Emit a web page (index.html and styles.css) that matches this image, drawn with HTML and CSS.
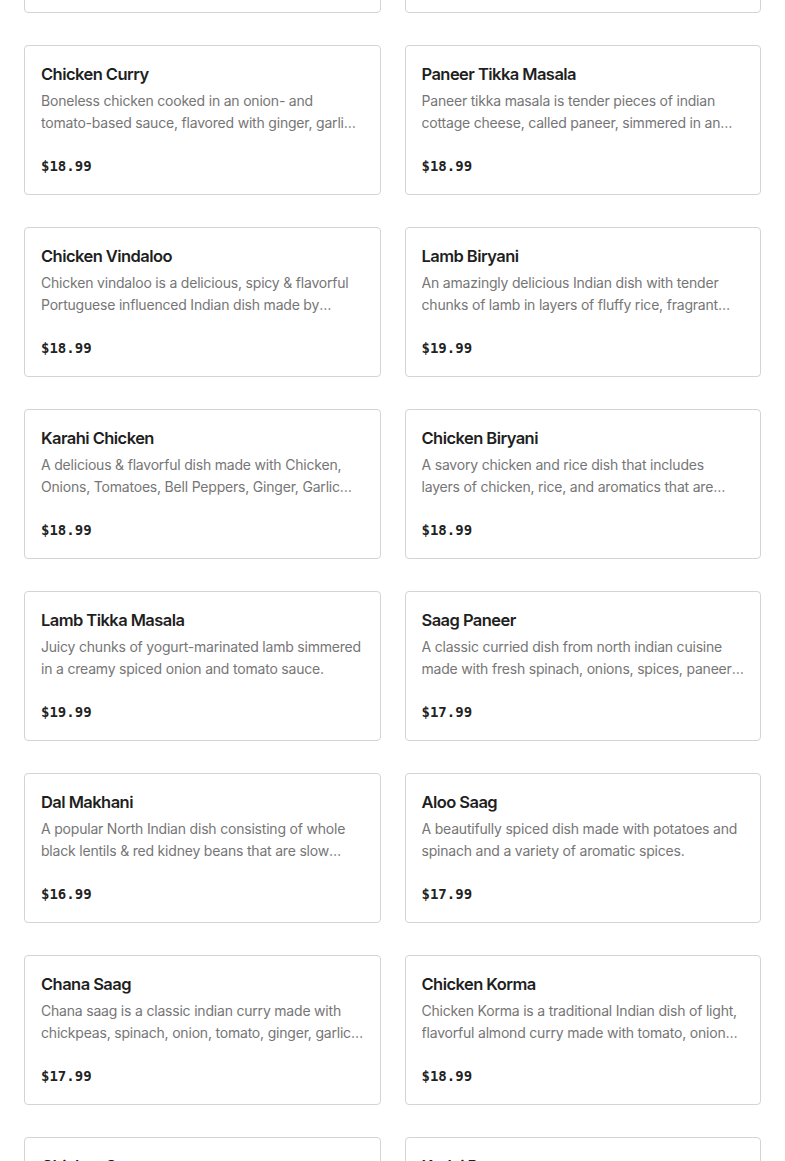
FILE: index.html
```html
<!DOCTYPE html>
<html lang="en">
<head>
<meta charset="utf-8">
<title>Menu</title>
<link rel="stylesheet" href="styles.css">
</head>
<body>
<main class="menu">
  <div class="grid">
    <article class="card"><h3 class="name">Butter Chicken</h3><p class="desc">Tender chicken cooked in a rich and creamy tomato sauce with butter and aromatic spices.</p><p class="price">$18.99</p></article>
    <article class="card"><h3 class="name">Chicken Tikka Masala</h3><p class="desc">Grilled chunks of chicken simmered in a creamy spiced tomato sauce.</p><p class="price">$18.99</p></article>

    <article class="card"><h3 class="name">Chicken Curry</h3><p class="desc">Boneless chicken cooked in an onion- and tomato-based sauce, flavored with ginger, garlic, tomato puree, chilli peppers and a variety of spices.</p><p class="price">$18.99</p></article>
    <article class="card"><h3 class="name">Paneer Tikka Masala</h3><p class="desc">Paneer tikka masala is tender pieces of indian cottage cheese, called paneer, simmered in an aromatic, creamy and spiced tomato gravy.</p><p class="price">$18.99</p></article>

    <article class="card"><h3 class="name">Chicken Vindaloo</h3><p class="desc">Chicken vindaloo is a delicious, spicy &amp; flavorful Portuguese influenced Indian dish made by marinating chicken in vinegar and spices.</p><p class="price">$18.99</p></article>
    <article class="card"><h3 class="name">Lamb Biryani</h3><p class="desc">An amazingly delicious Indian dish with tender chunks of lamb in layers of fluffy rice, fragrant spices and caramelized onions.</p><p class="price">$19.99</p></article>

    <article class="card"><h3 class="name">Karahi Chicken</h3><p class="desc">A delicious &amp; flavorful dish made with Chicken, Onions, Tomatoes, Bell Peppers, Ginger, Garlic &amp;&nbsp;spices cooked in a karahi.</p><p class="price">$18.99</p></article>
    <article class="card"><h3 class="name">Chicken Biryani</h3><p class="desc">A savory chicken and rice dish that includes layers of chicken, rice, and aromatics that are steamed together.</p><p class="price">$18.99</p></article>

    <article class="card"><h3 class="name">Lamb Tikka Masala</h3><p class="desc">Juicy chunks of yogurt-marinated lamb simmered in a creamy spiced onion and tomato sauce.</p><p class="price">$19.99</p></article>
    <article class="card"><h3 class="name">Saag Paneer</h3><p class="desc">A classic curried dish from north indian cuisine made with fresh spinach, onions, spices, paneer and cream.</p><p class="price">$17.99</p></article>

    <article class="card"><h3 class="name">Dal Makhani</h3><p class="desc">A popular North Indian dish consisting of whole black lentils &amp; red kidney beans that are slow cooked with butter and cream.</p><p class="price">$16.99</p></article>
    <article class="card"><h3 class="name">Aloo Saag</h3><p class="desc">A beautifully spiced dish made with potatoes and spinach and a variety of aromatic spices.</p><p class="price">$17.99</p></article>

    <article class="card"><h3 class="name">Chana Saag</h3><p class="desc">Chana saag is a classic indian curry made with chickpeas, spinach, onion, tomato, ginger, garlic and spices.</p><p class="price">$17.99</p></article>
    <article class="card"><h3 class="name">Chicken Korma</h3><p class="desc">Chicken Korma is a traditional Indian dish of&nbsp;light, flavorful almond curry made with tomato, onion and cream.</p><p class="price">$18.99</p></article>

    <article class="card"><h3 class="name">Chicken Saag</h3><p class="desc">Tender chicken cooked with fresh spinach, onions, tomatoes and spices.</p><p class="price">$18.99</p></article>
    <article class="card"><h3 class="name">Kadai Paneer</h3><p class="desc">Paneer cooked with bell peppers, onions and freshly ground kadai masala.</p><p class="price">$17.99</p></article>
  </div>
</main>
</body>
</html>
```

FILE: styles.css
```css
html, body {
  margin: 0;
  padding: 0;
  background: #ffffff;
}

body {
  font-family: Inter, "Noto Sans", "Liberation Sans", sans-serif;
  color: #1f1f1f;
  overflow: hidden;
  height: 1161px;
}

.menu {
  padding: 0 24px;
}

.grid {
  display: grid;
  grid-template-columns: 1fr 1fr;
  column-gap: 24px;
  row-gap: 32px;
  margin-top: -137px;
}

.card {
  box-sizing: border-box;
  height: 150px;
  border: 1px solid #d4d4d4;
  border-radius: 4px;
  padding: 16px;
  display: flex;
  flex-direction: column;
  background: #fff;
}

.name {
  margin: 0 0 4px;
  font-size: 16.5px;
  line-height: 24px;
  font-weight: 600;
  color: #1f1f1f;
  letter-spacing: -0.55px;
}

.desc {
  margin: 0;
  font-size: 14px;
  line-height: 22px;
  color: #767676;
  letter-spacing: -0.2px;
  display: -webkit-box;
  -webkit-line-clamp: 2;
  -webkit-box-orient: vertical;
  overflow: hidden;
}

.price {
  margin: auto 0 0;
  font-family: "DejaVu Sans Mono", "Liberation Mono", monospace;
  font-weight: 700;
  font-size: 14px;
  line-height: 24px;
  color: #222;
}
```
